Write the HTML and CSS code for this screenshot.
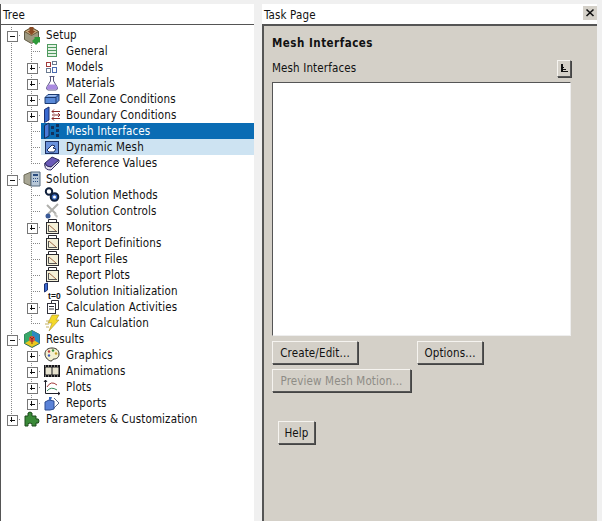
FILE: index.html
```html
<!DOCTYPE html>
<html lang="en">
<head>
<meta charset="utf-8">
<title>Mesh Interfaces</title>
<link rel="stylesheet" href="styles.css">
</head>
<body>
<div class="app">
  <section class="tree-pane">
    <header class="pane-title">Tree</header>
    <ul class="tree">
      <li class="row"><span class="twist minus"></span><span class="item top"><svg class="ico" viewBox="0 0 18 18"><path d="M1.500 5.500l7-4 7 4v8l-7 4-7-4z" fill="#9c9880" stroke="#5f5a44"/><path d="M1.500 5.500l7 4 7-4-7-4z" fill="#c9ab80" stroke="#6a5a3c"/><path d="M6.500 1h4v4h2l-4 4-4-4h2z" fill="#8a4a24"/><path d="M9 15l3-3-1-1h6v6l-1-1-3 3z" fill="#2e9a3a"/></svg><span class="label">Setup</span></span></li>
      <li class="row"><span class="guide"></span><span class="twist"></span><span class="item"><svg class="ico" viewBox="0 0 16 16"><rect x="3.500" y="1.500" width="9" height="12" fill="#e4f2e4" stroke="#4f9a5f"/><path d="M4 4.500h8M4 7.500h8M4 10.500h8" stroke="#4f9a5f"/></svg><span class="label">General</span></span></li>
      <li class="row"><span class="guide"></span><span class="twist plus"></span><span class="item"><svg class="ico" viewBox="0 0 16 16"><g fill="#fff"><rect x="2.500" y="3.500" width="4" height="4" stroke="#a33a3a"/><rect x="8.500" y="2.500" width="4" height="3" stroke="#6a7a90"/><rect x="2.500" y="9.500" width="4" height="4" stroke="#6a7a90"/><rect x="8.500" y="8.500" width="4" height="5" stroke="#4a6ab0"/></g></svg><span class="label">Models</span></span></li>
      <li class="row"><span class="guide"></span><span class="twist plus"></span><span class="item"><svg class="ico" viewBox="0 0 16 16"><path d="M5.500 1.500h5M6.500 1.500v4.500L2.500 12.500q-.5 2 1.500 2.500h8q2-.5 1.500-2.500L9.500 6V1.500" fill="#fff" stroke="#55557a"/><path d="M4.500 9.500h7l2 3.500q0 1.500-1.500 1.500H4q-1.500 0-1.500-1.500z" fill="#a98ae0"/></svg><span class="label">Materials</span></span></li>
      <li class="row"><span class="guide"></span><span class="twist plus"></span><span class="item"><svg class="ico" viewBox="0 0 16 16"><path d="M1 6.500l3-3h11v6l-3 3H1z" fill="#5a8ad8" stroke="#1c3a70"/><path d="M2 5.500h9l2-1.500H5z" fill="#a8c4f0"/><path d="M1 6.500h11v6M12 6.500l3-3" fill="none" stroke="#1c3a70"/></svg><span class="label">Cell Zone Conditions</span></span></li>
      <li class="row"><span class="guide"></span><span class="twist plus"></span><span class="item"><svg class="ico" viewBox="0 0 16 16"><path d="M.5 2.500L5 0v13l-4.500 2.500z" fill="#3a6ad0" stroke="#1c2f70"/><path d="M8 4.500h8M8 8h8M8 11.500h8" stroke="#8a2a2a"/><path d="M10 2.500L8 4.500l2 2M14 6l2 2-2 2M10 9.500l-2 2 2 2" fill="none" stroke="#8a2a2a"/></svg><span class="label">Boundary Conditions</span></span></li>
      <li class="row"><span class="guide"></span><span class="twist"></span><span class="item selected"><svg class="ico" viewBox="0 0 16 16"><path d="M.5 2.500L5 0v13l-4.500 2.500z" fill="#4a7ad8" stroke="#12305c"/><g fill="#12305c"><rect x="7" y="3" width="3" height="3"/><rect x="7" y="9" width="3" height="3"/><rect x="12" y="1" width="3" height="3"/><rect x="12" y="6" width="3" height="3"/><rect x="12" y="11" width="3" height="3"/></g></svg><span class="label">Mesh Interfaces</span></span></li>
      <li class="row"><span class="guide"></span><span class="twist"></span><span class="item selected-soft"><svg class="ico" viewBox="0 0 16 16"><rect x="1.500" y="2.500" width="13" height="12" fill="#6a92dc" stroke="#1c2f60"/><path d="M3 11l5-5 3 1-2 2 3 1-2 3H5z" fill="#fff" stroke="#1c2f60"/></svg><span class="label">Dynamic Mesh</span></span></li>
      <li class="row"><span class="guide"></span><span class="twist last"></span><span class="item"><svg class="ico" viewBox="0 0 16 16"><path d="M1 8l7-6 7 3-8 7q-3 1-6-1z" fill="#6a5ab8" stroke="#2e2a60"/><path d="M1 8q1 4 6 4l8-7v2l-8 8q-6 0-6-4z" fill="#e4e0f0" stroke="#2e2a60"/></svg><span class="label">Reference Values</span></span></li>

      <li class="row"><span class="twist minus"></span><span class="item top"><svg class="ico" viewBox="0 0 18 18"><path d="M1 5l7-3v14l-7-3z" fill="#a8a694" stroke="#6c6a58"/><path d="M8 2h9v14H8z" fill="#b8c8d8" stroke="#54687c"/><path d="M10 4h5v2h-5zM10 8h1v1h-1zM12 8h1v1h-1zM14 8h1v1h-1zM10 11h1v1h-1zM12 11h1v1h-1zM14 11h1v1h-1z" fill="#2a4c80"/></svg><span class="label">Solution</span></span></li>
      <li class="row"><span class="guide"></span><span class="twist"></span><span class="item"><svg class="ico" viewBox="0 0 16 16"><circle cx="5" cy="4.500" r="3.200" fill="#fff" stroke="#10203c" stroke-width="2"/><circle cx="10.500" cy="10" r="3.800" fill="#3a6ac0" stroke="#10203c" stroke-width="2"/><circle cx="10.500" cy="10" r="1.500" fill="#fff"/></svg><span class="label">Solution Methods</span></span></li>
      <li class="row"><span class="guide"></span><span class="twist"></span><span class="item"><svg class="ico" viewBox="0 0 16 16"><path d="M3 2l9 9M14 1L4 11" stroke="#b0b0ac" stroke-width="2"/><circle cx="4" cy="13" r="2.500" fill="#3a5a98"/><path d="M11 10l3 3-1 2-3-3z" fill="#c4c4c0"/></svg><span class="label">Solution Controls</span></span></li>
      <li class="row"><span class="guide"></span><span class="twist plus"></span><span class="item"><svg class="ico" viewBox="0 0 16 16"><use href="#chart"/></svg><span class="label">Monitors</span></span></li>
      <li class="row"><span class="guide"></span><span class="twist"></span><span class="item"><svg class="ico" viewBox="0 0 16 16"><use href="#chart"/></svg><span class="label">Report Definitions</span></span></li>
      <li class="row"><span class="guide"></span><span class="twist"></span><span class="item"><svg class="ico" viewBox="0 0 16 16"><use href="#chart"/></svg><span class="label">Report Files</span></span></li>
      <li class="row"><span class="guide"></span><span class="twist"></span><span class="item"><svg class="ico" viewBox="0 0 16 16"><use href="#chart"/></svg><span class="label">Report Plots</span></span></li>
      <li class="row"><span class="guide"></span><span class="twist"></span><span class="item"><svg class="ico" viewBox="0 0 16 16"><path d="M.5 1L3.500 0v7l-3 2z" fill="#3a6ad0" stroke="#1c2f70"/><text x="4" y="16" class="t0">t=0</text></svg><span class="label">Solution Initialization</span></span></li>
      <li class="row"><span class="guide"></span><span class="twist plus"></span><span class="item"><svg class="ico" viewBox="0 0 16 16"><path d="M7.500 4.500v-3h7v9h-3" fill="none" stroke="#30303a"/><rect x="3.500" y="4.500" width="8" height="10" fill="#fff" stroke="#30303a"/><path d="M5 7.500h5M5 10h5" stroke="#30303a"/></svg><span class="label">Calculation Activities</span></span></li>
      <li class="row"><span class="guide"></span><span class="twist last"></span><span class="item"><svg class="ico" viewBox="0 0 16 16"><path d="M8 0h7l-3 5h3L5 16l3-8H4z" fill="#f4d828" stroke="#a89030" stroke-width=".6"/><path d="M2 6h4M1 9h4M2 12h3" stroke="#c4b060"/></svg><span class="label">Run Calculation</span></span></li>

      <li class="row"><span class="twist minus"></span><span class="item top"><svg class="ico" viewBox="0 0 18 18"><path d="M9 .5l7.500 4v9l-7.500 4-7.500-4v-9z" fill="#e8c820" stroke="#2a6a5a"/><path d="M9 .5l7.500 4v9L9 9z" fill="#2a8ac0"/><path d="M1.500 4.500L9 .5V9l-7.500 4.500z" fill="#38a868"/><circle cx="9" cy="9" r="3" fill="#d8503a"/><path d="M7 7l2 2 2-2M9 9v5" stroke="#8a2a1a" fill="none"/></svg><span class="label">Results</span></span></li>
      <li class="row"><span class="guide"></span><span class="twist plus"></span><span class="item"><svg class="ico" viewBox="0 0 16 16"><path d="M8 1c4 0 7 2 7 6s-3 5-5 5-1 2-3 2-6-3-6-7 3-6 7-6z" fill="#f4f0d0" stroke="#30302a"/><circle cx="5" cy="4.500" r="1.200" fill="#c03a3a"/><circle cx="9" cy="3.500" r="1.200" fill="#3a8a3a"/><circle cx="12" cy="6.500" r="1.200" fill="#c8a028"/><circle cx="5" cy="8.500" r="1.200" fill="#3a5ac0"/></svg><span class="label">Graphics</span></span></li>
      <li class="row"><span class="guide"></span><span class="twist plus"></span><span class="item"><svg class="ico" viewBox="0 0 16 16"><rect y="2" width="16" height="12" fill="#14141a"/><rect x="1.500" y="4.500" width="6" height="7" fill="#e8e4d0"/><rect x="8.500" y="4.500" width="6" height="7" fill="#e8e4d0"/><path d="M1 3h14M1 13h14" stroke="#e8e4d0" stroke-dasharray="1 2"/></svg><span class="label">Animations</span></span></li>
      <li class="row"><span class="guide"></span><span class="twist plus"></span><span class="item"><svg class="ico" viewBox="0 0 16 16"><path d="M1.500 1v13.500H16" fill="none" stroke="#20202a"/><path d="M0 3l1.500-2L3 3M14 13l2 1.500-2 1.500" fill="none" stroke="#20202a"/><path d="M3 8q4-7 10-2" fill="none" stroke="#a03a3a"/><path d="M3 12q4-5 10-1" fill="none" stroke="#3a8a5a"/></svg><span class="label">Plots</span></span></li>
      <li class="row"><span class="guide"></span><span class="twist plus"></span><span class="item"><svg class="ico" viewBox="0 0 16 16"><path d="M10 3l5 5-5 5" fill="#fff" stroke="#5a6a8a"/><path d="M1 7l4-2 5 1v8l-4 1H1z" fill="#5a82d8" stroke="#2a4a90"/><path d="M5 2h3l-1 3H5z" fill="#3a6ac0"/></svg><span class="label">Reports</span></span></li>

      <li class="row"><span class="twist plus"></span><span class="item top"><svg class="ico" viewBox="0 0 18 18"><path d="M2 6h3V3q2-2 4 0v3h4v3q3-1 3 2t-3 2v3H9q1-3-2-3t-2 3H2z" fill="#3a8a38" stroke="#1c4a1c"/></svg><span class="label">Parameters &amp; Customization</span></span></li>
    </ul>
  </section>

  <section class="task-pane">
    <header class="pane-title task-title">Task Page<button class="close" type="button" aria-label="Close"><svg viewBox="0 0 14 14" width="14" height="14"><path d="M3.500 3.500l7 6.500M10.500 3.500l-7 6.500" stroke="#111" stroke-width="1.600"/></svg></button></header>
    <div class="task-body">
      <h1 class="heading">Mesh Interfaces</h1>
      <div class="list-head">
        <span>Mesh Interfaces</span>
        <button class="btn tool" type="button" aria-label="Sort"><svg viewBox="0 0 12 12" width="12" height="12"><path d="M3 2h2v8H3zM5 5h1v1H5zM5 7h3v1H5zM3 9h7v1H3z" fill="#111"/></svg></button>
      </div>
      <div class="listbox"></div>
      <div class="actions">
        <button class="btn create" type="button">Create/Edit...</button>
        <button class="btn options" type="button">Options...</button>
      </div>
      <button class="btn preview" type="button" disabled>Preview Mesh Motion...</button>
      <button class="btn help" type="button">Help</button>
    </div>
  </section>
</div>
<svg class="defs" width="0" height="0" aria-hidden="true"><symbol id="chart" viewBox="0 0 16 16"><path d="M4.500 3.500v-3h8v10" fill="#fff" stroke="#2a2a30"/><rect x="2.500" y="3.500" width="12" height="11" fill="#f4f0d8" stroke="#2a2a30"/><path d="M4.500 6v6.500H13" fill="none" stroke="#555"/><path d="M5 6l7 6" stroke="#a06a4a"/></symbol></svg>
</body>
</html>
```
FILE: styles.css
```css
* { box-sizing: border-box; }
html, body { margin: 0; height: 100%; }
body { background: #f0f0f0; font-family: "DejaVu Sans", sans-serif; font-stretch: condensed; font-size: 11.5px; letter-spacing: .14px; color: #111; overflow: hidden; }
.defs { display: block; }
.app { display: flex; height: 521px; padding-top: 4px; }
.pane-title { height: 21px; background: #fff; padding: 3px 0 0 2px; line-height: 16px; border-bottom: 1px solid #555; }
.tree-pane { width: 254px; display: flex; flex-direction: column; background: #fff; border-left: 1px solid #555; }
.tree { list-style: none; margin: 0; padding: 2px 0 0 1px; flex: 1; background: #fff; }
.row { display: flex; height: 16px; }
.guide { width: 20px; height: 16px; flex: none; background: repeating-linear-gradient(to bottom, #888 0 1px, transparent 1px 2px) 9px 0 / 1px 100% no-repeat; }
.twist { width: 19px; height: 16px; flex: none; position: relative; background: repeating-linear-gradient(to right, #888 0 1px, transparent 1px 2px) 9px 8px / 10px 1px no-repeat, repeating-linear-gradient(to bottom, #888 0 1px, transparent 1px 2px) 9px 0 / 1px 100% no-repeat; }
.twist.last { background-size: 10px 1px, 1px 9px; }
.plus::before, .minus::before { content: ""; position: absolute; left: 5px; top: 4px; width: 9px; height: 9px; border: 1px solid #777; background: #fff linear-gradient(#111, #111) center / 5px 1px no-repeat; }
.plus::after { content: ""; position: absolute; left: 9px; top: 6px; width: 1px; height: 5px; background: #111; }
.item { display: flex; align-items: center; flex: 1; height: 16px; padding-left: 3px; }
.item.top { padding-left: 2px; }
.ico { width: 16px; height: 16px; flex: none; overflow: visible; }
.top .ico { width: 18px; height: 18px; }
.t0 { font: bold 8.500px "Liberation Sans", sans-serif; fill: #111; }
.label { margin-left: 6px; line-height: 16px; white-space: nowrap; }
.top .label { margin-left: 5px; }
.selected { background: #0a6cb4; color: #fff; }
.selected-soft { background: #cde3f2; }
.task-pane { margin-left: 8px; width: 335px; display: flex; flex-direction: column; }
.task-title { position: relative; border-bottom: 2px solid #555; height: 22px; padding-left: 2px; }
.close { position: absolute; right: 0; top: 2px; width: 14px; height: 14px; padding: 0; border: 0; background: #d4d0c8; display: flex; }
.task-body { flex: 1; background: #d4d0c8; border-left: 2px solid #555; padding: 9px 26px 0 8px; }
.heading { margin: 0; font-size: 11.5px; line-height: 16px; font-weight: bold; letter-spacing: .5px; }
.list-head { display: flex; justify-content: space-between; align-items: center; margin-top: 8px; height: 18px; line-height: 16px; }
.btn { font: inherit; letter-spacing: inherit; color: #111; background: #d4d0c8; padding: 0; border: 1px solid; border-color: #f6f4f0 #555 #555 #f6f4f0; box-shadow: 1px 1px 0 #444; }
.tool { width: 14px; height: 17px; display: flex; align-items: center; justify-content: center; }
.listbox { margin-top: 5px; width: 299px; height: 254px; background: #fff; border: 1px solid; border-color: #555 #eee #eee #555; }
.actions { display: flex; gap: 59px; margin-top: 5px; }
.create { width: 86px; height: 23px; }
.options { width: 66px; height: 23px; }
.preview { display: block; width: 139px; height: 23px; margin-top: 5px; color: #8e8c86; }
.help { display: block; width: 37px; height: 23px; margin: 29px 0 0 6px; }
```
